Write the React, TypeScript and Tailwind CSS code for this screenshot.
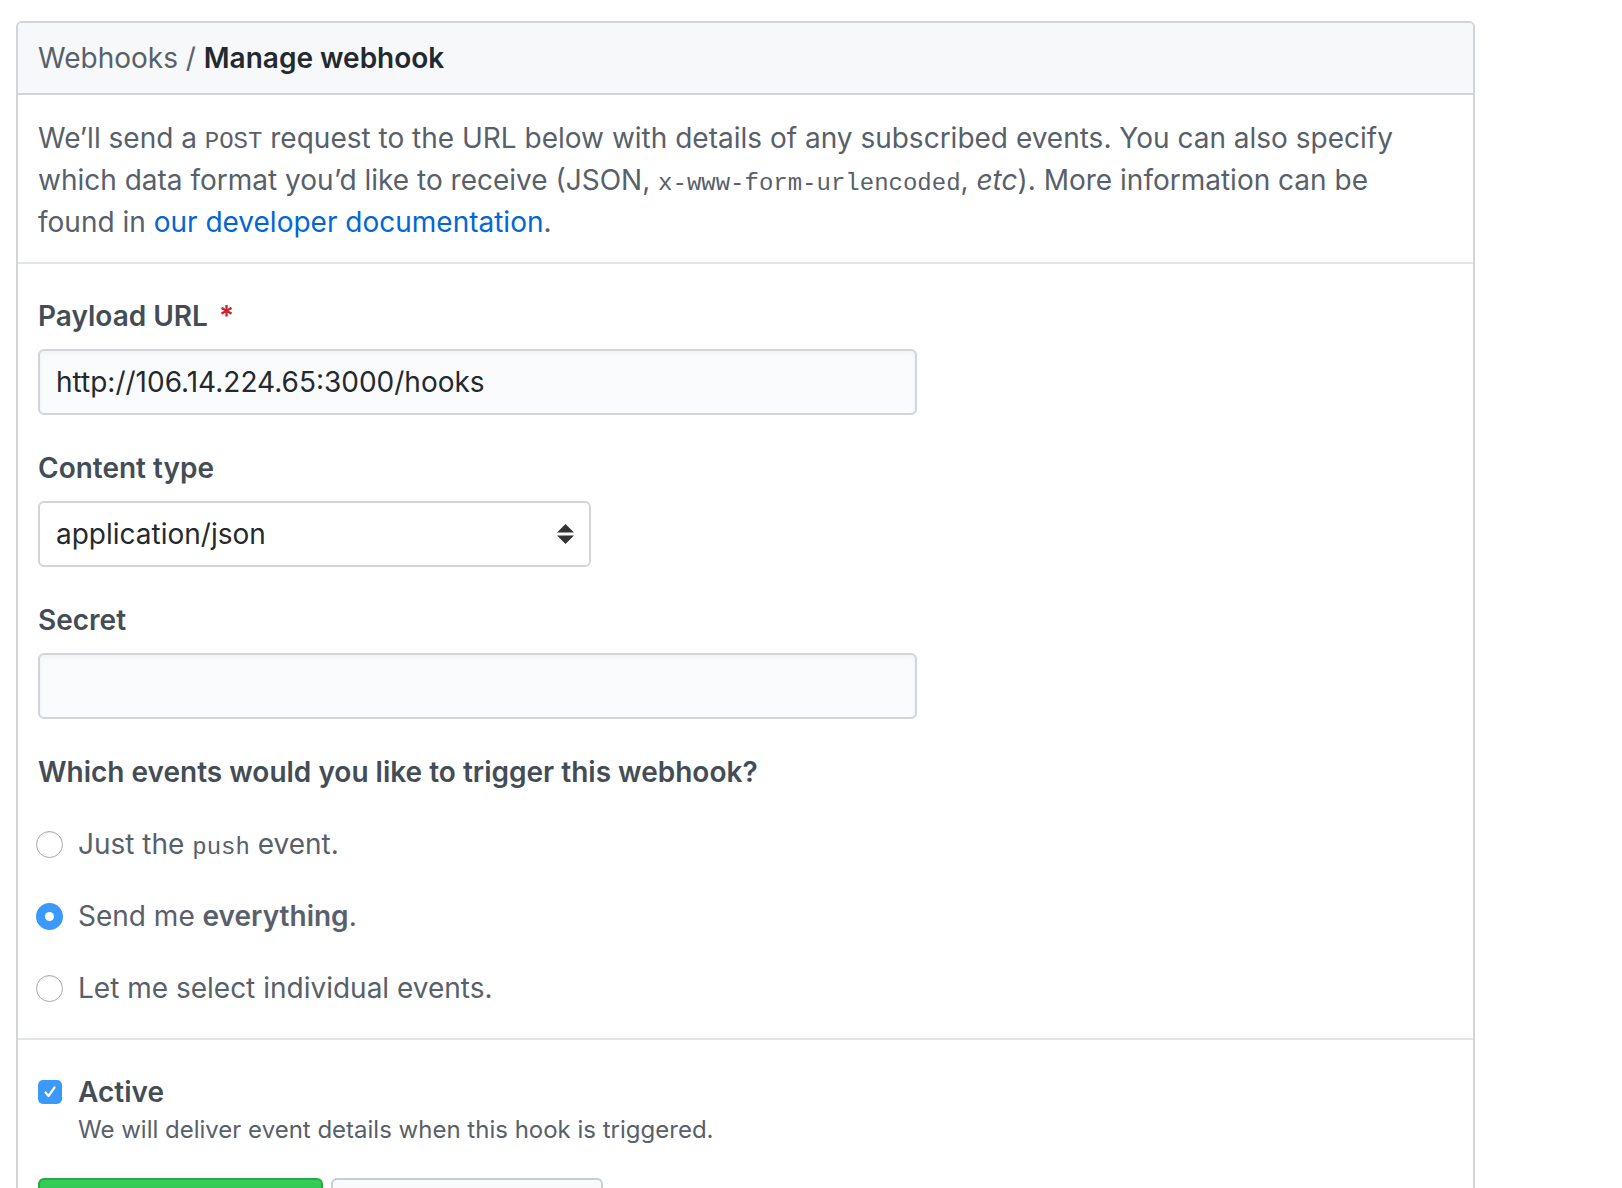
import React from 'react';

const mono = "font-['Liberation_Mono','DejaVu_Sans_Mono',monospace] text-[24px] leading-none";

const Radio: React.FC<{ checked?: boolean }> = ({ checked }) =>
  checked ? (
    <span className="flex h-[27px] w-[27px] shrink-0 items-center justify-center rounded-full bg-[#3b99fc]">
      <span className="h-[9px] w-[9px] rounded-full bg-white" />
    </span>
  ) : (
    <span className="h-[27px] w-[27px] shrink-0 rounded-full border border-[#a9a9a9] bg-white shadow-[inset_0_1px_1px_rgba(0,0,0,0.08)]" />
  );

const Field: React.FC<{ label: React.ReactNode; children: React.ReactNode }> = ({ label, children }) => (
  <div className="mb-[32px]">
    <div className="mb-[12px] leading-[42px] font-semibold text-[#444d56]">{label}</div>
    {children}
  </div>
);

const App: React.FC = () => {
  return (
    <div className="h-[1188px] overflow-hidden bg-white pl-[16px] pt-[21px] font-['Inter','Liberation_Sans',sans-serif] text-[28px] text-[#24292e]">
      <div className="w-[1459px] rounded-t-[6px] border-2 border-b-0 border-[#d1d5da]">
        {/* header */}
        <div className="flex h-[72px] items-center rounded-t-[4px] border-b-2 border-[#d1d5da] bg-[#f6f8fa] px-[20px]">
          <span className="text-[#586069]">Webhooks /&nbsp;</span>
          <span className="font-semibold text-[#24292e]">Manage webhook</span>
        </div>

        <div className="border-b-2 border-[#e1e4e8] px-[20px] pb-[19px] pt-[22px] leading-[42px] text-[#586069]">
          We’ll send a <code className={mono}>POST</code> request to the URL below with details of any subscribed events. You can also specify
          <br />
          which data format you’d like to receive (JSON, <code className={mono}>x-www-form-urlencoded</code>, <em>etc</em>). More information can be
          <br />
          found in <a className="text-[#0366d6]">our developer documentation</a>.
        </div>

        <div className="border-b-2 border-[#e1e4e8] px-[20px] pb-[29px] pt-[31px]">
          <Field
            label={
              <>
                Payload URL <span className="ml-[4px] text-[#cb2431]">*</span>
              </>
            }
          >
            <div className="flex h-[66px] w-[879px] items-center rounded-[6px] border-2 border-[#d1d5da] bg-[#fafbfc] px-[16px] shadow-[inset_0_2px_4px_rgba(27,31,35,0.05)]">
              http://106.14.224.65:3000/hooks
            </div>
          </Field>

          <Field label="Content type">
            <div className="flex h-[66px] w-[553px] items-center justify-between rounded-[6px] border-2 border-[#d1d5da] bg-white pl-[16px] pr-[15px]">
              <span>application/json</span>
              <svg width="17" height="20" viewBox="0 0 17 20">
                <polygon points="8.5,0 17,8.5 0,8.5" fill="#333" />
                <polygon points="0,11.5 17,11.5 8.5,20" fill="#333" />
              </svg>
            </div>
          </Field>

          <Field label="Secret">
            <div className="h-[66px] w-[879px] rounded-[6px] border-2 border-[#d1d5da] bg-[#fafbfc] shadow-[inset_0_2px_4px_rgba(27,31,35,0.05)]" />
          </Field>

          <div className="leading-[42px] font-semibold text-[#444d56]">Which events would you like to trigger this webhook?</div>

          <div className="mt-[30px] flex flex-col gap-[30px] text-[#586069]">
            <label className="-ml-[2px] flex h-[42px] items-center gap-[15px]">
              <Radio />
              <span>
                Just the <code className={mono}>push</code> event.
              </span>
            </label>
            <label className="-ml-[2px] flex h-[42px] items-center gap-[15px]">
              <Radio checked />
              <span>
                Send me <strong className="font-semibold">everything</strong>.
              </span>
            </label>
            <label className="-ml-[2px] flex h-[42px] items-center gap-[15px]">
              <Radio />
              <span>Let me select individual events.</span>
            </label>
          </div>
        </div>

        <div className="px-[20px] pt-[31px]">
          <div className="flex h-[42px] items-center gap-[16px]">
            <span className="flex h-[24px] w-[24px] items-center justify-center rounded-[5px] bg-[#3b99fc]">
              <svg width="16" height="16" viewBox="0 0 16 16">
                <path d="M3.5 8.5 L6.5 12 L12.5 3.5" fill="none" stroke="white" strokeWidth="2.2" strokeLinecap="round" strokeLinejoin="round" />
              </svg>
            </span>
            <span className="font-semibold text-[#444d56]">Active</span>
          </div>
          <div className="pl-[40px] text-[24px] leading-[34px] text-[#586069]">We will deliver event details when this hook is triggered.</div>

          <div className="mt-[31px] flex gap-[8px]">
            <button aria-label="Update webhook" className="h-[66px] w-[285px] rounded-[6px] border-2 border-[#28a745] bg-gradient-to-b from-[#34d058] to-[#28a745]" />
            <button aria-label="Delete webhook" className="h-[66px] w-[272px] rounded-[6px] border-2 border-[#c8cdd2] bg-gradient-to-b from-[#fafbfc] to-[#eff3f6]" />
          </div>
        </div>
      </div>
    </div>
  );
};

export default App;
